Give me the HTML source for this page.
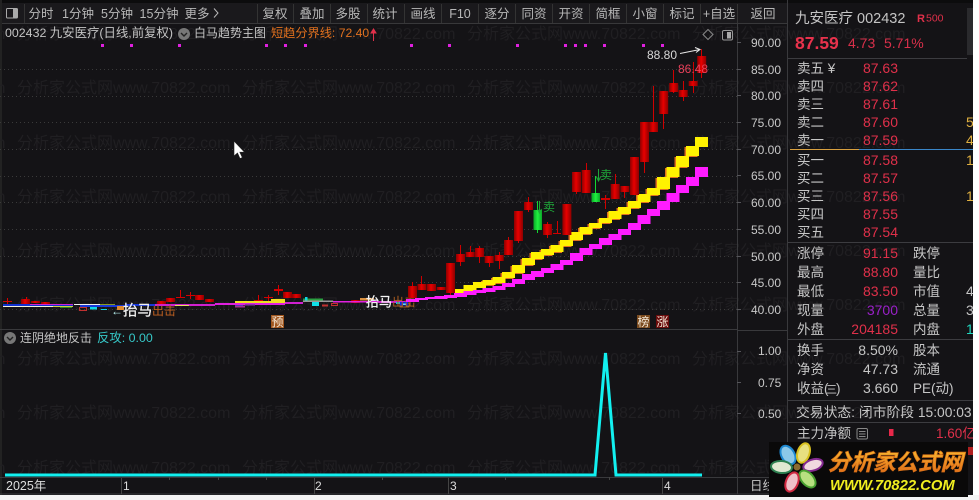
<!DOCTYPE html>
<html><head><meta charset="utf-8"><style>
html,body{margin:0;padding:0;background:#fff;width:979px;height:500px;overflow:hidden}
svg{display:block}
text{font-family:"Liberation Sans","Noto Sans CJK SC",sans-serif;font-size:12px;fill:#c4c4c4}
.wm text{fill:#201f22;font-size:16px}
.tb text{text-anchor:middle;fill:#b8b8b8;font-size:12.5px}
.l text{font-size:13.5px;fill:#c6c6c6}
.p text{font-size:14px;fill:#e0304a;text-anchor:end}
.ax text{font-size:12px;fill:#c8c8c8}
</style></head><body>
<svg width="979" height="500" viewBox="0 0 979 500" xmlns="http://www.w3.org/2000/svg">
<defs>
<linearGradient id="c" x1="0" x2="1" y1="0" y2="0"><stop offset="0" stop-color="#8e0000"/><stop offset=".45" stop-color="#e80000"/><stop offset="1" stop-color="#8e0000"/></linearGradient>
<linearGradient id="g" x1="0" x2="1" y1="0" y2="0"><stop offset="0" stop-color="#0aa828"/><stop offset=".5" stop-color="#20f040"/><stop offset="1" stop-color="#0aa828"/></linearGradient>
<linearGradient id="o" x1="0" x2="0" y1="0" y2="1"><stop offset="0" stop-color="#f8b830"/><stop offset="1" stop-color="#e06818"/></linearGradient>
</defs>
<rect width="979" height="500" fill="#fff"/>
<rect x="0" y="0" width="973" height="495" fill="#141316"/>
<rect x="0" y="0" width="973" height="3" fill="#0c0c0d"/>
<rect x="0" y="3" width="788" height="20" fill="#1a191c"/>
<rect x="0" y="23" width="788" height="1" fill="#38383a"/>
<rect x="0" y="0" width="2" height="495" fill="#222"/>

<g class="wm">
<text x="17" y="39">分析家公式网www.70822.com</text><text x="242" y="39">分析家公式网www.70822.com</text><text x="467" y="39">分析家公式网www.70822.com</text><text x="692" y="39">分析家公式网www.70822.com</text><text x="-208" y="39">分析家公式网www.70822.com</text>
<text x="17" y="93">分析家公式网www.70822.com</text><text x="242" y="93">分析家公式网www.70822.com</text><text x="467" y="93">分析家公式网www.70822.com</text><text x="692" y="93">分析家公式网www.70822.com</text><text x="-208" y="93">分析家公式网www.70822.com</text>
<text x="17" y="148">分析家公式网www.70822.com</text><text x="242" y="148">分析家公式网www.70822.com</text><text x="467" y="148">分析家公式网www.70822.com</text><text x="692" y="148">分析家公式网www.70822.com</text><text x="-208" y="148">分析家公式网www.70822.com</text>
<text x="17" y="202">分析家公式网www.70822.com</text><text x="242" y="202">分析家公式网www.70822.com</text><text x="467" y="202">分析家公式网www.70822.com</text><text x="692" y="202">分析家公式网www.70822.com</text><text x="-208" y="202">分析家公式网www.70822.com</text>
<text x="17" y="256">分析家公式网www.70822.com</text><text x="242" y="256">分析家公式网www.70822.com</text><text x="467" y="256">分析家公式网www.70822.com</text><text x="692" y="256">分析家公式网www.70822.com</text><text x="-208" y="256">分析家公式网www.70822.com</text>
<text x="17" y="310">分析家公式网www.70822.com</text><text x="242" y="310">分析家公式网www.70822.com</text><text x="467" y="310">分析家公式网www.70822.com</text><text x="692" y="310">分析家公式网www.70822.com</text><text x="-208" y="310">分析家公式网www.70822.com</text>
<text x="17" y="364">分析家公式网www.70822.com</text><text x="242" y="364">分析家公式网www.70822.com</text><text x="467" y="364">分析家公式网www.70822.com</text><text x="692" y="364">分析家公式网www.70822.com</text><text x="-208" y="364">分析家公式网www.70822.com</text>
<text x="17" y="418">分析家公式网www.70822.com</text><text x="242" y="418">分析家公式网www.70822.com</text><text x="467" y="418">分析家公式网www.70822.com</text><text x="692" y="418">分析家公式网www.70822.com</text><text x="-208" y="418">分析家公式网www.70822.com</text>
<text x="17" y="473">分析家公式网www.70822.com</text><text x="242" y="473">分析家公式网www.70822.com</text><text x="467" y="473">分析家公式网www.70822.com</text><text x="692" y="473">分析家公式网www.70822.com</text><text x="-208" y="473">分析家公式网www.70822.com</text>
</g>

<!-- toolbar -->
<rect x="6.5" y="8.5" width="11" height="9.5" rx="1" fill="none" stroke="#aaa"/><rect x="13" y="9" width="4" height="8.5" fill="#aaa"/>
<rect x="24" y="4" width="1" height="19" fill="#333"/>
<g class="tb">
<text x="41" y="18">分时</text><text x="78" y="18">1分钟</text><text x="117" y="18">5分钟</text><text x="159" y="18">15分钟</text><text x="197" y="18">更多</text>
<text x="275" y="18">复权</text><text x="312" y="18">叠加</text><text x="348" y="18">多股</text><text x="385" y="18">统计</text><text x="423" y="18">画线</text><text x="460" y="18">F10</text><text x="497" y="18">逐分</text><text x="534" y="18">同资</text><text x="571" y="18">开资</text><text x="608" y="18">简框</text><text x="645" y="18">小窗</text><text x="682" y="18">标记</text><text x="719" y="18">+自选</text><text x="763" y="18">返回</text>
</g>
<path d="M214 8.5l4 4.5-4 4.5" stroke="#b8b8b8" fill="none"/>
<path d="M257.5 4v19M293.5 4v19M330.5 4v19M367.5 4v19M404.5 4v19M441.5 4v19M478.5 4v19M515.5 4v19M552.5 4v19M589.5 4v19M626.5 4v19M663.5 4v19M700.5 4v19M737.5 4v19" stroke="#333" fill="none"/>

<!-- grid -->
<path d="M0 69.5H737M0 96.5H737M0 122.5H737M0 149.5H737M0 176.5H737M0 202.5H737M0 229.5H737M0 256.5H737M0 282.5H737M0 309.5H737" stroke="#3a3a3a" stroke-dasharray="1 3" fill="none"/>

<!-- axes frame -->
<path d="M737.5 24V477M737.5 478V494M0 329.5H737M0 477.5H787M737 330.5H787M787.5 0V495M0 494H770" stroke="#39393c" fill="none"/>
<path d="M737 42.5h4M737 69.5h4M737 95.5h4M737 122.5h4M737 149.5h4M737 175.5h4M737 202.5h4M737 229.5h4M737 256.5h4M737 282.5h4M737 309.5h4M737 351.5h4M737 382.5h4M737 413.5h4" stroke="#55555a" fill="none"/>
<g class="ax">
<text x="751" y="47">90.00</text><text x="751" y="74">85.00</text><text x="751" y="100">80.00</text><text x="751" y="127">75.00</text><text x="751" y="154">70.00</text><text x="751" y="180">65.00</text><text x="751" y="207">60.00</text><text x="751" y="234">55.00</text><text x="751" y="261">50.00</text><text x="751" y="287">45.00</text><text x="751" y="314">40.00</text>
<text x="758" y="355">1.00</text><text x="758" y="387">0.75</text><text x="758" y="418">0.50</text>
<text x="750" y="490" style="font-size:12.5px">日线</text>
<text x="6" y="490" style="font-size:12.5px;fill:#ddd">2025年</text><text x="123" y="490" style="fill:#ddd">1</text><text x="315" y="490" style="fill:#ddd">2</text><text x="450" y="490" style="fill:#ddd">3</text><text x="664" y="490" style="fill:#ddd">4</text>
</g>
<path d="M121.5 478v16M314.5 478v16M448.5 478v16M662.5 478v16M169.5 477v3M218.5 477v3M266.5 477v3M382.5 477v3M505.5 477v3M609.5 477v3" stroke="#444" fill="none"/>

<!-- title -->
<text x="5" y="37" style="font-size:12.4px">002432 九安医疗(日线,前复权)</text>
<circle cx="184" cy="34" r="6" fill="#777"/><path d="M181 33l3 3 3-3" stroke="#222" stroke-width="1.4" fill="none"/>
<text x="194" y="37" style="font-size:12px">白马趋势主图</text>
<text x="271" y="37" style="font-size:12.2px;fill:#e0701e">短趋分界线: 72.40</text>
<path d="M373.5 41V29M371 33l2.5-4 2.5 4z" stroke="#e0304a" fill="#e0304a"/>
<path d="M708 29.5l5 5-5 5-5-5z" fill="none" stroke="#888"/>
<rect x="722.5" y="30.5" width="10" height="9.5" rx="1.5" fill="none" stroke="#999"/><rect x="727" y="32" width="4" height="6.5" fill="#aaa"/>

<!-- magenta markers -->
<path d="M101 44h3v3h-3zM130 44h3v3h-3zM178 44h3v3h-3zM265 44h3v3h-3zM284 44h3v3h-3zM304 44h3v3h-3zM410 44h3v3h-3zM448 44h3v3h-3zM516 44h3v3h-3zM564 44h3v3h-3zM574 44h3v3h-3zM584 44h3v3h-3zM603 44h3v3h-3zM642 44h3v3h-3zM661 44h3v3h-3z" fill="#e020e0"/>

<!-- low candles -->
<path d="M7.5 298v7M26.5 297v8M180.5 290v8M190.5 292v7M258.5 295v7M268.5 295v6M278.5 285v10M412.5 282v16" stroke="#d40000" fill="none"/>
<path d="M3 301h9v1H3zM176 297h9v1h-9zM186 295h9v1h-9zM254 300h9v1h-9zM264 297h9v1h-9zM274 289h9v2h-9z" fill="#d40000"/>
<rect x="21" y="299" width="9" height="5" fill="url(#c)"/><rect x="31" y="301" width="9" height="2" fill="url(#c)"/><rect x="41" y="302" width="9" height="3" fill="url(#c)"/><rect x="157" y="301" width="9" height="4" fill="url(#c)"/><rect x="166" y="298" width="9" height="4" fill="url(#c)"/><rect x="195" y="295" width="9" height="5" fill="url(#c)"/><rect x="205" y="299" width="9" height="3" fill="url(#c)"/><rect x="283" y="292" width="9" height="6" fill="url(#c)"/><rect x="292" y="294" width="9" height="4" fill="url(#c)"/><rect x="351" y="300" width="9" height="3" fill="url(#c)"/>

<!-- low ribbon -->
<rect x="3" y="304" width="70" height="2" fill="#1030d0"/><rect x="3" y="306" width="50" height="1" fill="#f0f0d8"/><rect x="53" y="306" width="20" height="1" fill="#d0d040"/><rect x="60" y="307" width="12" height="1" fill="#2a8a20"/>
<rect x="30" y="304" width="43" height="1" fill="#d020d0"/><rect x="74" y="304" width="26" height="1" fill="#eee"/><rect x="100" y="304" width="15" height="2" fill="#8a9a20"/><rect x="80" y="305" width="45" height="2" fill="#1838d8"/>
<path d="M79.5 307.5h7v3h-7z" fill="none" stroke="#c03030"/><rect x="90" y="307" width="7" height="2.5" fill="#10d8e8"/><rect x="101" y="309" width="6" height="1" fill="#10d8e8"/>
<rect x="125" y="304" width="35" height="2" fill="#1838d8"/><rect x="117" y="306" width="7" height="4" fill="#e08a30"/>
<rect x="155" y="304" width="60" height="2" fill="#d020d0"/><rect x="175" y="305" width="14" height="1" fill="#e8e060"/>
<rect x="215" y="303" width="70" height="2" fill="#e020e0"/><rect x="235" y="301" width="50" height="2" fill="#f0e020"/><rect x="271" y="299" width="14" height="3" fill="#f0e020"/><rect x="235" y="305" width="8" height="1.5" fill="#1838d8"/><rect x="235" y="305.5" width="10" height="2" fill="#a03090"/><rect x="245" y="304" width="10" height="1.5" fill="#9030b0"/>
<rect x="285" y="302" width="18" height="2" fill="#d020d0"/><rect x="303" y="298.5" width="20" height="2" fill="#2aa040"/><rect x="305" y="297" width="2.5" height="5" fill="#10d8e8"/><rect x="303" y="300.5" width="30" height="1.5" fill="#999"/>
<rect x="312" y="302" width="7" height="4" fill="#10e0e8"/><path d="M322 304.5h6v2h-6z" fill="#c03030"/><path d="M331.5 303.5h6v2h-6z" fill="none" stroke="#c03030"/>
<rect x="333" y="301" width="45" height="1.5" fill="#e020e0"/><rect x="360" y="298" width="14" height="2.5" fill="#d89040"/><rect x="378" y="301" width="30" height="2" fill="#d020d0"/><rect x="396" y="302" width="8" height="2" fill="#10c0e0"/>
<rect x="400" y="303" width="9" height="4" fill="none" stroke="#c07030" stroke-width=".8"/><rect x="400" y="302" width="8" height="3.5" fill="#0a28e0"/><rect x="403" y="303.5" width="3" height="1.5" fill="#60e0f0"/>
<text x="111" y="315" style="fill:#b8f0f0;font-size:12px">←</text><text x="152" y="315" style="fill:#c06020;font-size:12px">出击</text><text x="123" y="315.5" style="fill:#f0f0f0;font-size:14.5px;stroke:#f0f0f0;stroke-width:.3">抬马</text>
<text x="392" y="306" style="fill:#b06020;font-size:12px">出击</text><text x="366" y="306.5" style="fill:#f4f4f4;font-size:13px;stroke:#f4f4f4;stroke-width:.3">抬马</text>

<!-- ribbons -->
<path fill="#e0701e" transform="translate(-1.5,1)" d="M686 146h13v10h-13zM676 156h13v11h-13zM666.5 167h13v10h-13zM657 177h13v12h-13zM647 188h13v7h-13zM637.5 194h13v8h-13zM628 201h13v7h-13zM618 207h13v7h-13zM608.5 211h13v8h-13zM599 218h13v5h-13zM589 223h13v5h-13zM579.5 227h13v7h-13zM570 232h13v8h-13zM560 240h13v6h-13zM550.5 245h13v7h-13zM541 249h13v6h-13zM531 252h13v7h-13zM522 258h13v7h-13zM512 265h13v8h-13zM502 272h13v6h-13zM492.5 277h13v6h-13zM482.5 280h13v5h-13z"/>
<path fill="#fff200" d="M695 137h13v10h-13zM686 146h13v10h-13zM676 156h13v11h-13zM666.5 167h13v10h-13zM657 177h13v12h-13zM647 188h13v7h-13zM637.5 194h13v8h-13zM628 201h13v7h-13zM618 207h13v7h-13zM608.5 211h13v8h-13zM599 218h13v5h-13zM589 223h13v5h-13zM579.5 227h13v7h-13zM570 232h13v8h-13zM560 240h13v6h-13zM550.5 245h13v7h-13zM541 249h13v6h-13zM531 252h13v7h-13zM522 258h13v7h-13zM512 265h13v8h-13zM502 272h13v6h-13zM492.5 277h13v6h-13zM482.5 280h13v5h-13zM473 282h13v6h-13zM463.5 285h13v6h-13zM454 289h13v4h-13z"/>
<path fill="#ff1cff" d="M695 167h13v10h-13zM686 177h13v9h-13zM676 185h13v8h-13zM666.5 193h13v9h-13zM657 201h13v9h-13zM647 209h13v7h-13zM637.5 215h13v9h-13zM628 223h13v7h-13zM618 229h13v6h-13zM608.5 234h13v6h-13zM599 238h13v7h-13zM589 244h13v5h-13zM579.5 248h13v7h-13zM570 253h13v8h-13zM560 260h13v5h-13zM550.5 264h13v6h-13zM541 268h13v5h-13zM531 271h13v6h-13zM522 274h13v6h-13zM512 279h13v5h-13zM502 283h13v4h-13zM492.5 286h13v4h-13zM482.5 288h13v4h-13zM473 290h13v3h-13zM463.5 291h13v4h-13zM454 293h13v4h-13zM444 295h13v3h-13zM434.5 296h13v3h-13zM425 297h13v2h-13zM415 298h13v2h-13zM406 299h13v3h-13z"/>

<!-- candles -->
<path stroke="#d00000" fill="none" d="M412.5 282v16M421.5 276v14M450.5 290v5M460.5 245v21M470.5 246v11M479.5 246v17M489.5 256v11M499.5 252v17M508.5 237v18M518.5 238v5M528.5 197v15M547.5 222v16M557.5 221v13M576.5 190v4M586.5 163v30M605.5 195v14M615.5 174v25M624.5 186v12M644.5 160v13M653.5 86v46M663.5 110v19M673.5 70v23M683.5 81v20M693.5 62v31M701.5 49v29"/>
<rect x="408" y="286" width="9" height="12" fill="url(#c)"/><rect x="417.5" y="284" width="9" height="6" fill="url(#c)"/><rect x="427" y="284" width="9" height="7" fill="url(#c)"/><rect x="436.7" y="287" width="9" height="3" fill="url(#c)"/><rect x="446" y="263" width="9" height="30" fill="url(#c)"/><rect x="456" y="254" width="9" height="8" fill="url(#c)"/><rect x="465.7" y="252" width="9" height="5" fill="url(#c)"/><rect x="475" y="248" width="9" height="9" fill="url(#c)"/><rect x="484.7" y="256" width="9" height="7" fill="url(#c)"/><rect x="494.7" y="255" width="9" height="6" fill="url(#c)"/><rect x="504" y="240" width="9" height="15" fill="url(#c)"/><rect x="514" y="211" width="9" height="30" fill="url(#c)"/><rect x="524" y="202" width="9" height="8" fill="url(#c)"/><rect x="543" y="224" width="9" height="11" fill="url(#c)"/><rect x="553" y="233" width="8" height="1" fill="#d00000"/><rect x="562.4" y="204" width="9" height="31" fill="url(#c)"/><rect x="572" y="172" width="9" height="20" fill="url(#c)"/><rect x="581.7" y="170" width="9" height="23" fill="url(#c)"/><rect x="601" y="198" width="9" height="2" fill="#d00000"/><rect x="610.7" y="184" width="9" height="15" fill="url(#c)"/><rect x="620.4" y="186" width="9" height="6" fill="url(#c)"/><rect x="630" y="157" width="9" height="38" fill="url(#c)"/><rect x="640" y="122" width="9" height="40" fill="url(#c)"/><rect x="649" y="122" width="9" height="10" fill="url(#c)"/><rect x="659.2" y="91" width="9" height="23" fill="url(#c)"/><rect x="669.2" y="83" width="9" height="9" fill="url(#c)"/><rect x="678.7" y="90" width="9" height="7" fill="url(#c)"/><rect x="688.7" y="81" width="9" height="5" fill="url(#c)"/><rect x="697.2" y="56" width="9" height="17" fill="url(#c)"/>
<path stroke="#12d830" fill="none" d="M537.5 201v32M595.5 176v26"/>
<rect x="533.5" y="210" width="8.5" height="20" fill="url(#g)"/><rect x="591.5" y="193" width="8.5" height="9" fill="url(#g)"/>
<path d="M539.5 201v11M537.5 209l2 4 2-4" stroke="#1fa83a" fill="none"/><text x="543" y="211" style="fill:#1fa83a;font-size:12px">卖</text>
<path d="M598.5 169v11M596.5 177l2 4 2-4" stroke="#1fa83a" fill="none"/><text x="600" y="179" style="fill:#1fa83a;font-size:12px">卖</text>
<text x="647" y="59" style="font-size:12px;fill:#d8d8d8">88.80</text><path d="M680 53.5l20-4M695 47.5l5 2-4 3" stroke="#e8e8e8" fill="none"/>
<text x="678" y="73" style="font-size:12px;fill:#e8405a">86.48</text>

<!-- badges -->
<rect x="271" y="315" width="13" height="13" fill="#a0561e"/><text x="271.5" y="326" style="font-size:12px;fill:#f4e8d8">预</text>
<rect x="637" y="315" width="13" height="13" fill="#7a4a1e"/><text x="637.5" y="326" style="font-size:12px;fill:#f4e8d8">榜</text>
<rect x="656" y="315" width="13" height="13" fill="#6a0c0c"/><text x="656.5" y="326" style="font-size:12px;fill:#f4e8d8">涨</text>

<!-- lower panel -->
<circle cx="10" cy="338" r="6" fill="#777"/><path d="M7 337l3 3 3-3" stroke="#222" stroke-width="1.4" fill="none"/>
<text x="20" y="342" style="font-size:12px">连阴绝地反击</text>
<text x="97" y="342" style="font-size:12.4px;fill:#36c8c8">反攻: 0.00</text>
<path d="M5 475H595L605.5 353L616 475H702" stroke="#12f0f0" stroke-width="3" fill="none"/>
<!-- cursor -->
<path d="M234 141v15l3.5-3 2.5 5.5 2.3-1-2.5-5.3h4.7z" fill="#fff" stroke="#222" stroke-width=".6"/>

<!-- right panel -->
<path d="M788 58.5H967M788 242.5H973M788 339.5H973M788 400.5H973M788 422.5H973" stroke="#3c3c40" fill="none"/>
<rect x="967" y="8" width="6" height="47" fill="#2a2a2d"/>
<text x="795" y="23" style="font-size:14.5px;fill:#c4c4c4">九安医疗 002432</text>
<text x="917" y="22" style="font-size:11px;font-weight:bold;fill:#e0304a">R</text><text x="926" y="21.5" style="font-size:10.5px;fill:#e0304a">500</text>
<text x="795" y="49" style="font-size:17.5px;font-weight:bold;fill:#e8324c">87.59</text>
<text x="848" y="48" style="font-size:14px;fill:#d8304a">4.73</text><text x="884" y="48" style="font-size:14px;fill:#d8304a">5.71%</text>
<g class="l">
<text x="797" y="73">卖五 ¥</text><text x="797" y="91">卖四</text><text x="797" y="109">卖三</text><text x="797" y="127">卖二</text><text x="797" y="145">卖一</text>
<text x="797" y="165">买一</text><text x="797" y="183">买二</text><text x="797" y="201">买三</text><text x="797" y="219">买四</text><text x="797" y="237">买五</text>
<text x="797" y="258">涨停</text><text x="797" y="277">最高</text><text x="797" y="296">最低</text><text x="797" y="315">现量</text><text x="797" y="334">外盘</text>
<text x="913" y="258">跌停</text><text x="913" y="277">量比</text><text x="913" y="296">市值</text><text x="913" y="315">总量</text><text x="913" y="334">内盘</text>
<text x="797" y="355">换手</text><text x="797" y="374">净资</text><text x="797" y="393">收益(</text><text x="826" y="393" style="font-size:11px">三</text><text x="836" y="393">)</text>
<text x="913" y="355">股本</text><text x="913" y="374">流通</text><text x="913" y="393">PE(动)</text>
<text x="796" y="417" style="font-size:13.8px">交易状态: 闭市阶段 15:00:03</text>
<text x="797" y="438">主力净额</text>
</g>
<g class="p">
<text x="898" y="73">87.63</text><text x="898" y="91">87.62</text><text x="898" y="109">87.61</text><text x="898" y="127">87.60</text><text x="898" y="145">87.59</text>
<text x="898" y="165">87.58</text><text x="898" y="183">87.57</text><text x="898" y="201">87.56</text><text x="898" y="219">87.55</text><text x="898" y="237">87.54</text>
<text x="898" y="258">91.15</text><text x="898" y="277">88.80</text><text x="898" y="296">83.50</text><text x="898" y="315" style="fill:#9a20c8">3700</text><text x="898" y="334">204185</text>
<text x="898" y="355" style="fill:#c6c6c6">8.50%</text><text x="898" y="374" style="fill:#c6c6c6">47.73</text><text x="898" y="393" style="fill:#c6c6c6">3.660</text>
</g>
<rect x="790" y="149" width="69" height="1" fill="#d8a040"/><rect x="859" y="149" width="114" height="1" fill="#3a86c8"/>
<text x="966" y="127" style="font-size:14px;fill:#e0b040">5</text><text x="966" y="145" style="font-size:14px;fill:#e0b040">4</text><text x="966" y="165" style="font-size:14px;fill:#e0b040">1</text><text x="966" y="201" style="font-size:14px;fill:#e0b040">1</text>
<text x="966" y="296" style="font-size:14px;fill:#c6c6c6">4</text><text x="966" y="315" style="font-size:14px;fill:#c6c6c6">3</text><text x="966" y="334" style="font-size:14px;fill:#20d8c0">1</text>
<rect x="857" y="428.5" width="10.5" height="10.5" rx="1.5" fill="none" stroke="#888"/><path d="M859 431.5h6.5M859 434h6.5M859 436.5h6.5" stroke="#888" fill="none"/>
<rect x="889" y="429" width="4.5" height="7" fill="#e8284a"/>
<text x="936" y="438" style="font-size:13.5px;fill:#e0304a">1.60亿</text>

<rect x="973" y="0" width="6" height="500" fill="#fff"/>
<rect x="0" y="495" width="979" height="5" fill="#f4f4f4"/>

<!-- logo -->
<rect x="769" y="442" width="199" height="55" fill="#0a0909"/>
<rect x="968" y="447" width="5" height="8" fill="#b02020"/>
<g stroke-width="2">
<ellipse cx="788" cy="455" rx="6.5" ry="10" fill="#8cc8e8" stroke="#1e88d0" transform="rotate(-30 788 455)"/>
<ellipse cx="803.5" cy="453" rx="6" ry="10" fill="#e8e080" stroke="#d8c020" transform="rotate(18 803.5 453)"/>
<ellipse cx="813" cy="465" rx="5.5" ry="10" fill="#f0d8e0" stroke="#842a90" transform="rotate(72 813 465)"/>
<ellipse cx="807.5" cy="479" rx="6" ry="10" fill="#b8e080" stroke="#48a030" transform="rotate(-42 807.5 479)"/>
<ellipse cx="792" cy="482" rx="6" ry="10" fill="#f0c0c8" stroke="#d02840" transform="rotate(22 792 482)"/>
<ellipse cx="781.5" cy="467" rx="6" ry="10.5" fill="#e0e8d0" stroke="#2e8050" transform="rotate(-85 781.5 467)"/>
<circle cx="797" cy="467" r="3.5" fill="#8a6a30" stroke="none"/>
</g>
<text x="828" y="470" style="font-size:22.5px;font-weight:bold;font-style:italic;fill:url(#o);stroke:#d87018;stroke-width:.7">分析家公式网</text>
<text x="830" y="490" style="font-size:14.8px;font-weight:bold;font-style:italic;fill:#f0ee20">WWW.70822.COM</text>
</svg>
</body></html>
